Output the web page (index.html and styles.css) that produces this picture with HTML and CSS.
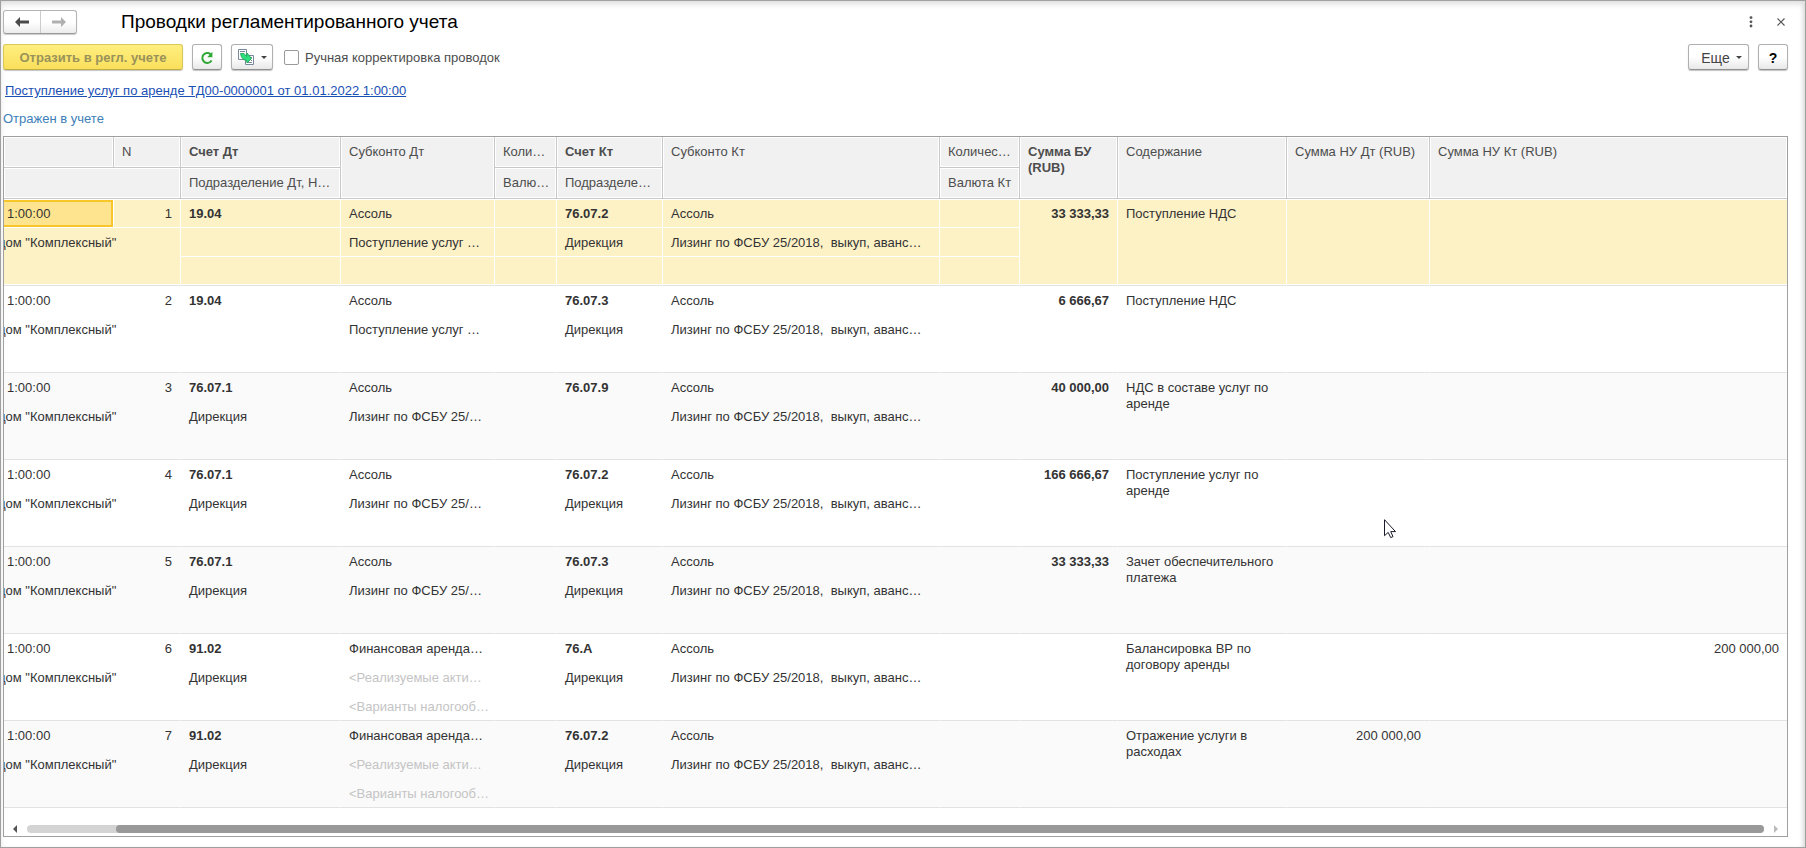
FILE: index.html
```html
<!DOCTYPE html>
<html lang="ru">
<head>
<meta charset="utf-8">
<title>Проводки регламентированного учета</title>
<link rel="stylesheet" href="styles.css">
</head>
<body>
<main class="window">
  <header class="titlebar">
    <div class="nav">
      <button class="nav-btn" type="button" aria-label="Назад"><svg width="14" height="10" viewBox="0 0 14 10"><path d="M0 5 5 0v3.500H14v3H5V10z" fill="#4a4a4a"/></svg></button>
      <button class="nav-btn" type="button" aria-label="Вперед"><svg width="14" height="10" viewBox="0 0 14 10"><path d="M14 5 9 0v3.500H0v3h9V10z" fill="#b0b0b0"/></svg></button>
    </div>
    <h1 class="title">Проводки регламентированного учета</h1>
    <div class="window-tools">
      <button class="plain" type="button" aria-label="Меню"><svg width="4" height="12" viewBox="0 0 4 12" fill="#555"><circle cx="2" cy="1.600" r="1.400"/><circle cx="2" cy="5.800" r="1.400"/><circle cx="2" cy="10" r="1.400"/></svg></button>
      <button class="plain" type="button" aria-label="Закрыть"><svg width="8" height="8" viewBox="0 0 8 8"><path d="M.5.5l7 7M7.500.5l-7 7" stroke="#555" stroke-width="1.100"/></svg></button>
    </div>
  </header>

  <div class="toolbar">
    <button class="btn primary" type="button">Отразить в регл. учете</button>
    <button class="btn square" type="button" aria-label="Обновить"><svg width="14" height="14" viewBox="0 0 14 14"><path d="M10.600 3.200A5 5 0 1 0 11.600 9.600" fill="none" stroke="#2fa836" stroke-width="2"/><path d="M12.400.8v5.400H7.200z" fill="#2fa836"/></svg></button>
    <button class="btn split" type="button" aria-label="Перейти"><svg width="17" height="17" viewBox="0 0 17 17"><path d="M.5.5h8v10h-8z" fill="#fff" stroke="#76889a"/><path d="M2 2.500h5" stroke="#76889a"/><path d="M7.500 6.500h8v9h-8z" fill="#fff" stroke="#76889a"/><path d="M12 8.500h2M13 11.500h1M10 13.500h4" stroke="#76889a"/><path d="M2.500 4.500H6l2.500 3 .5-3.500 4.500 5.500L9 14l-.5-2.500C5 11 3 8.500 2.500 4.500z" fill="#2ee07c" stroke="#1c9a50" stroke-width=".8"/></svg><span class="caret"></span></button>
    <label class="check"><input type="checkbox">Ручная корректировка проводок</label>
    <div class="toolbar-end">
      <button class="btn more" type="button">Еще<span class="caret"></span></button>
      <button class="btn square help" type="button">?</button>
    </div>
  </div>

  <div class="doc-line"><a class="doc-link" href="#">Поступление услуг по аренде ТД00-0000001 от 01.01.2022 1:00:00</a></div>
  <div class="status">Отражен в учете</div>

  <section class="grid">
    <table class="entries">
      <colgroup>
        <col class="w-date"><col class="w-n"><col class="w-acc"><col class="w-sub"><col class="w-qty"><col class="w-acck"><col class="w-subk"><col class="w-qtyk"><col class="w-sum"><col class="w-text"><col class="w-nu"><col>
      </colgroup>
      <thead>
        <tr><th></th><th>N</th><th class="b">Счет Дт</th><th rowspan="2">Субконто Дт</th><th>Коли…</th><th class="b">Счет Кт</th><th rowspan="2">Субконто Кт</th><th>Количес…</th><th class="b wrap" rowspan="2">Сумма БУ (RUB)</th><th rowspan="2">Содержание</th><th rowspan="2">Сумма НУ Дт (RUB)</th><th rowspan="2">Сумма НУ Кт (RUB)</th></tr>
        <tr><th colspan="2"></th><th>Подразделение Дт, Н…</th><th>Валю…</th><th>Подразделе…</th><th>Валюта Кт</th></tr>
      </thead>
      <tbody class="selected">
        <tr><td class="date active">1:00:00</td><td class="num">1</td><td class="b">19.04</td><td>Ассоль</td><td></td><td class="b">76.07.2</td><td>Ассоль</td><td></td><td class="num b tall" rowspan="3">33 333,33</td><td class="wrap tall" rowspan="3">Поступление НДС</td><td class="num tall" rowspan="3"></td><td class="num tall" rowspan="3"></td></tr>
        <tr><td class="org tall" colspan="2" rowspan="2">дом "Комплексный"</td><td></td><td>Поступление услуг …</td><td></td><td>Дирекция</td><td>Лизинг по ФСБУ 25/2018,  выкуп, аванс…</td><td></td></tr>
        <tr><td></td><td></td><td></td><td></td><td></td><td></td></tr>
      </tbody>
      <tbody>
        <tr><td class="date">1:00:00</td><td class="num">2</td><td class="b">19.04</td><td>Ассоль</td><td></td><td class="b">76.07.3</td><td>Ассоль</td><td></td><td class="num b tall" rowspan="3">6 666,67</td><td class="wrap tall" rowspan="3">Поступление НДС</td><td class="num tall" rowspan="3"></td><td class="num tall" rowspan="3"></td></tr>
        <tr><td class="org tall" colspan="2" rowspan="2">дом "Комплексный"</td><td></td><td>Поступление услуг …</td><td></td><td>Дирекция</td><td>Лизинг по ФСБУ 25/2018,  выкуп, аванс…</td><td></td></tr>
        <tr><td></td><td></td><td></td><td></td><td></td><td></td></tr>
      </tbody>
      <tbody class="alt">
        <tr><td class="date">1:00:00</td><td class="num">3</td><td class="b">76.07.1</td><td>Ассоль</td><td></td><td class="b">76.07.9</td><td>Ассоль</td><td></td><td class="num b tall" rowspan="3">40 000,00</td><td class="wrap tall" rowspan="3">НДС в составе услуг по аренде</td><td class="num tall" rowspan="3"></td><td class="num tall" rowspan="3"></td></tr>
        <tr><td class="org tall" colspan="2" rowspan="2">дом "Комплексный"</td><td>Дирекция</td><td>Лизинг по ФСБУ 25/…</td><td></td><td></td><td>Лизинг по ФСБУ 25/2018,  выкуп, аванс…</td><td></td></tr>
        <tr><td></td><td></td><td></td><td></td><td></td><td></td></tr>
      </tbody>
      <tbody>
        <tr><td class="date">1:00:00</td><td class="num">4</td><td class="b">76.07.1</td><td>Ассоль</td><td></td><td class="b">76.07.2</td><td>Ассоль</td><td></td><td class="num b tall" rowspan="3">166 666,67</td><td class="wrap tall" rowspan="3">Поступление услуг по аренде</td><td class="num tall" rowspan="3"></td><td class="num tall" rowspan="3"></td></tr>
        <tr><td class="org tall" colspan="2" rowspan="2">дом "Комплексный"</td><td>Дирекция</td><td>Лизинг по ФСБУ 25/…</td><td></td><td>Дирекция</td><td>Лизинг по ФСБУ 25/2018,  выкуп, аванс…</td><td></td></tr>
        <tr><td></td><td></td><td></td><td></td><td></td><td></td></tr>
      </tbody>
      <tbody class="alt">
        <tr><td class="date">1:00:00</td><td class="num">5</td><td class="b">76.07.1</td><td>Ассоль</td><td></td><td class="b">76.07.3</td><td>Ассоль</td><td></td><td class="num b tall" rowspan="3">33 333,33</td><td class="wrap tall" rowspan="3">Зачет обеспечительного платежа</td><td class="num tall" rowspan="3"></td><td class="num tall" rowspan="3"></td></tr>
        <tr><td class="org tall" colspan="2" rowspan="2">дом "Комплексный"</td><td>Дирекция</td><td>Лизинг по ФСБУ 25/…</td><td></td><td>Дирекция</td><td>Лизинг по ФСБУ 25/2018,  выкуп, аванс…</td><td></td></tr>
        <tr><td></td><td></td><td></td><td></td><td></td><td></td></tr>
      </tbody>
      <tbody>
        <tr><td class="date">1:00:00</td><td class="num">6</td><td class="b">91.02</td><td>Финансовая аренда…</td><td></td><td class="b">76.А</td><td>Ассоль</td><td></td><td class="num b tall" rowspan="3"></td><td class="wrap tall" rowspan="3">Балансировка ВР по договору аренды</td><td class="num tall" rowspan="3"></td><td class="num tall" rowspan="3">200 000,00</td></tr>
        <tr><td class="org tall" colspan="2" rowspan="2">дом "Комплексный"</td><td>Дирекция</td><td class="hint">&lt;Реализуемые акти…</td><td></td><td>Дирекция</td><td>Лизинг по ФСБУ 25/2018,  выкуп, аванс…</td><td></td></tr>
        <tr><td></td><td class="hint">&lt;Варианты налогооб…</td><td></td><td></td><td></td><td></td></tr>
      </tbody>
      <tbody class="alt">
        <tr><td class="date">1:00:00</td><td class="num">7</td><td class="b">91.02</td><td>Финансовая аренда…</td><td></td><td class="b">76.07.2</td><td>Ассоль</td><td></td><td class="num b tall" rowspan="3"></td><td class="wrap tall" rowspan="3">Отражение услуги в расходах</td><td class="num tall" rowspan="3">200 000,00</td><td class="num tall" rowspan="3"></td></tr>
        <tr><td class="org tall" colspan="2" rowspan="2">дом "Комплексный"</td><td>Дирекция</td><td class="hint">&lt;Реализуемые акти…</td><td></td><td>Дирекция</td><td>Лизинг по ФСБУ 25/2018,  выкуп, аванс…</td><td></td></tr>
        <tr><td></td><td class="hint">&lt;Варианты налогооб…</td><td></td><td></td><td></td><td></td></tr>
      </tbody>
    </table>
    <div class="scroll">
      <span class="arrow left"></span>
      <div class="track"><div class="thumb"></div></div>
      <span class="arrow right"></span>
    </div>
  </section>
</main>
<svg class="cursor" width="13" height="20" viewBox="0 0 13 20"><path d="M.5.7v16l3.700-3.300 2.500 5.200 2.300-1-2.300-5h4.800z" fill="#fff" stroke="#1a1a2a"/></svg>
</body>
</html>
```
FILE: styles.css
```css
* { box-sizing: border-box; }

body {
  margin: 0;
  background: #fff;
  color: #333;
  font: 13px/16px "Liberation Sans", Arial, sans-serif;
}

button, input { font: inherit; margin: 0; }

.window {
  min-height: 100vh;
  padding: 9px 17px 10px 2px;
  border: 1px solid #a0a0a0;
  box-shadow: inset 0 4px 6px -1px #ddd, inset -4px 0 4px -2px #ddd;
}

.titlebar { display: flex; align-items: center; height: 24px; }

.nav {
  display: flex;
  height: 24px;
  border: 1px solid #b4b4b4;
  border-bottom-color: #999;
  border-radius: 3px;
  background: linear-gradient(#fff 50%, #ececec);
  box-shadow: 0 1px 1px #ccc;
}

.nav-btn {
  display: flex;
  align-items: center;
  justify-content: center;
  width: 36px;
  padding: 0;
  border: 0;
  background: none;
}
.nav-btn + .nav-btn { border-left: 1px solid #ccc; }

.title {
  margin: 0 0 0 44px;
  color: #000;
  font-size: 19px;
  font-weight: 400;
  line-height: 26px;
}

.window-tools { display: flex; gap: 24px; margin-left: auto; padding-right: 3px; }
.plain { display: flex; align-items: center; padding: 0; border: 0; background: none; }

.toolbar { display: flex; align-items: center; height: 26px; margin-top: 10px; gap: 9px; }
.toolbar-end { display: flex; gap: 9px; margin-left: auto; }

.btn {
  display: flex;
  align-items: center;
  justify-content: center;
  height: 26px;
  padding: 1px 0 0;
  border: 1px solid #b0b0b0;
  border-bottom-color: #909090;
  border-radius: 3px;
  background: linear-gradient(#fff 50%, #e8e8e8);
  box-shadow: 0 1px 1px #c4c4c4;
  color: #444;
}
.primary {
  width: 180px;
  border-color: #d9c75a;
  border-bottom-color: #c0ae40;
  background: linear-gradient(#ffef80, #fadf5c);
  color: #99925a;
  font-weight: 700;
}
.square { width: 30px; }
.split { width: 42px; gap: 6px; }
.more { width: 61px; gap: 6px; padding-left: 6px; font-size: 14px; }
.help { color: #000; font-size: 14px; font-weight: 700; }

.caret {
  border: 3px solid transparent;
  border-top-color: #444;
  border-bottom-width: 0;
}

.check { display: flex; align-items: center; gap: 6px; padding: 1px 0 0 2px; color: #4d4d4d; }
.check input {
  width: 15px;
  height: 15px;
  border: 1px solid #999;
  border-radius: 2px;
  background: #fff;
  appearance: none;
}

.doc-line { margin-top: 13px; padding-left: 2px; }
.doc-link { color: #1a4fb4; }
.status { margin-top: 12px; color: #4080b8; }

.grid { margin-top: 9px; border: 1px solid #a0a0a0; overflow: hidden; }

.entries { width: 100%; table-layout: fixed; border-collapse: separate; border-spacing: 0; }
.w-date { width: 110px; }
.w-n { width: 67px; }
.w-acc { width: 160px; }
.w-sub { width: 154px; }
.w-qty { width: 62px; }
.w-acck { width: 106px; }
.w-subk { width: 277px; }
.w-qtyk { width: 80px; }
.w-sum { width: 98px; }
.w-text { width: 169px; }
.w-nu { width: 143px; }

.entries th {
  height: 31px;
  padding: 7px 7px 0 8px;
  border-right: 1px solid #c8c8c8;
  border-bottom: 1px solid #c8c8c8;
  background: #f1f1f1;
  box-shadow: inset 0 0 0 1px #fff;
  color: #4d4d4d;
  font-weight: 400;
  text-align: left;
  vertical-align: top;
  white-space: nowrap;
}
.entries td {
  height: 29px;
  padding: 7px 7px 0 8px;
  border-right: 1px solid transparent;
  border-bottom: 1px solid transparent;
  vertical-align: top;
  white-space: pre;
}
.entries th:last-child:not([colspan]):is([rowspan]),
.entries td:last-child:is([rowspan]) { border-right: 0; }
.entries .b { font-weight: 700; }
.entries .wrap { white-space: normal; }
.entries .num { padding-right: 8px; text-align: right; }
.entries .date { padding-left: 3px; }
.entries .org { padding-left: 0; text-indent: -6px; }
.entries .hint { color: #c4c4c4; }
.entries tbody tr:last-child td,
.entries td.tall { border-bottom-color: #e2e2e2; }

.alt td { background: #fafafa; }

.selected td { border-color: #fff; background: #fdf1c6; }
.selected tr:first-child td { box-shadow: inset 0 1px #fff; }
.selected tr:last-child td,
.selected td.org { box-shadow: inset 0 -1px #fff; }
.selected tr:first-child td.tall { box-shadow: inset 0 1px #fff, inset 0 -1px #fff; }
.selected tr:first-child td.active {
  background: #fee48f;
  box-shadow: inset 0 1px #fff, inset -2px -2px #f9c62a, inset 0 3px #f9c62a;
}

.scroll { display: flex; align-items: center; gap: 10px; height: 28px; padding: 14px 9px 0; }
.track { flex: 1; height: 8px; border-radius: 4px; background: #d4d4d4; }
.thumb { height: 8px; margin-left: 5.1%; border-radius: 4px; background: #999; }
.arrow { border: 4px solid transparent; }
.left { border-left-width: 0; border-right-color: #555; }
.right { border-right-width: 0; border-left-color: #bbb; }

.cursor { position: absolute; left: 1384px; top: 519px; }
```
